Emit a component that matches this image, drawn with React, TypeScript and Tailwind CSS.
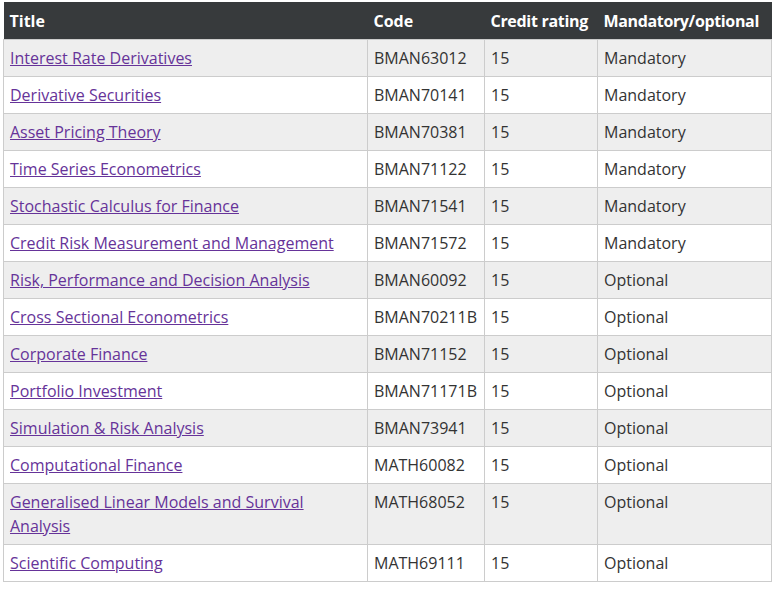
import React, { FC } from "react";

type Unit = {
	title: string;
	code: string;
	credits: number;
	kind: string;
};

const units: Unit[] = [
	{ title: "Interest Rate Derivatives", code: "BMAN63012", credits: 15, kind: "Mandatory" },
	{ title: "Derivative Securities", code: "BMAN70141", credits: 15, kind: "Mandatory" },
	{ title: "Asset Pricing Theory", code: "BMAN70381", credits: 15, kind: "Mandatory" },
	{ title: "Time Series Econometrics", code: "BMAN71122", credits: 15, kind: "Mandatory" },
	{ title: "Stochastic Calculus for Finance", code: "BMAN71541", credits: 15, kind: "Mandatory" },
	{ title: "Credit Risk Measurement and Management", code: "BMAN71572", credits: 15, kind: "Mandatory" },
	{ title: "Risk, Performance and Decision Analysis", code: "BMAN60092", credits: 15, kind: "Optional" },
	{ title: "Cross Sectional Econometrics", code: "BMAN70211B", credits: 15, kind: "Optional" },
	{ title: "Corporate Finance", code: "BMAN71152", credits: 15, kind: "Optional" },
	{ title: "Portfolio Investment", code: "BMAN71171B", credits: 15, kind: "Optional" },
	{ title: "Simulation & Risk Analysis", code: "BMAN73941", credits: 15, kind: "Optional" },
	{ title: "Computational Finance", code: "MATH60082", credits: 15, kind: "Optional" },
	{ title: "Generalised Linear Models and Survival Analysis", code: "MATH68052", credits: 15, kind: "Optional" },
	{ title: "Scientific Computing", code: "MATH69111", credits: 15, kind: "Optional" },
];

const UnitsTable: FC = () => {
	return (
		<div className="pl-[3px] pt-[2px] w-[771px]" style={{ fontFamily: '"Open Sans", sans-serif' }}>
			<table className="w-[768px] table-fixed border-collapse text-[16px] leading-[24px] text-[#333]">
				<colgroup>
					<col className="w-[364px]" />
					<col className="w-[117px]" />
					<col className="w-[113px]" />
					<col className="w-[174px]" />
				</colgroup>
				<thead>
					<tr className="bg-[#373a3c] text-white">
						<th className="px-[6px] pt-[7px] pb-[6px] text-left font-bold whitespace-nowrap">Title</th>
						<th className="px-[6px] pt-[7px] pb-[6px] text-left font-bold whitespace-nowrap">Code</th>
						<th className="px-[6px] pt-[7px] pb-[6px] text-left font-bold whitespace-nowrap tracking-[-0.3px]">Credit rating</th>
						<th className="px-[6px] pt-[7px] pb-[6px] text-left font-bold whitespace-nowrap tracking-[-0.35px]">Mandatory/optional</th>
					</tr>
				</thead>
				<tbody>
					{units.map((unit, idx) => (
						<tr key={unit.code} className={idx % 2 == 0 ? "bg-[#eeeeee]" : "bg-white"}>
							<td className="border border-[#cccccc] px-[6px] py-[6px] align-top">
								<a href="#" className="text-[#663399] underline">
									{unit.title}
								</a>
							</td>
							<td className="border border-[#cccccc] px-[6px] py-[6px] align-top">{unit.code}</td>
							<td className="border border-[#cccccc] px-[6px] py-[6px] align-top">{unit.credits}</td>
							<td className="border border-[#cccccc] px-[6px] py-[6px] align-top">{unit.kind}</td>
						</tr>
					))}
				</tbody>
			</table>
		</div>
	);
};

export default function App() {
	return <UnitsTable />;
}
